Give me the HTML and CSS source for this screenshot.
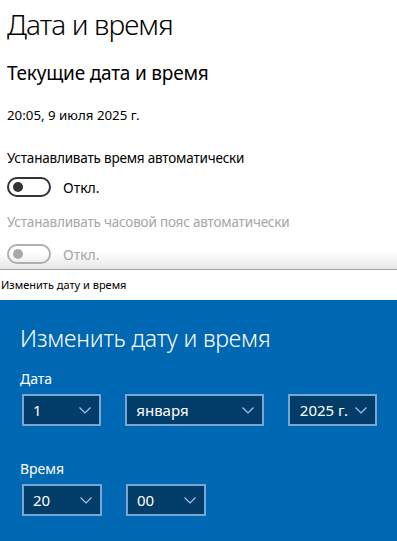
FILE: index.html
```html
<!DOCTYPE html>
<html>

<head>
  <meta charset="utf-8">
  <link rel="stylesheet" href="styles.css">
</head>

<body>
  <div class="настройки">
    <h1 class="заголовок">Дата и время</h1>
    <h2 class="подзаголовок">Текущие дата и время</h2>
    <div class="текущее">20:05, 9 июля 2025 г.</div>

    <div class="подпись">Устанавливать время автоматически</div>
    <div class="переключатель">
      <span class="тумблер"></span>
      <span class="состояние">Откл.</span>
    </div>

    <div class="подпись неактивно">Устанавливать часовой пояс автоматически</div>
    <div class="переключатель неактивно">
      <span class="тумблер"></span>
      <span class="состояние">Откл.</span>
    </div>
  </div>

  <div class="окно-заголовок">Изменить дату и время</div>

  <div class="диалог">
    <div class="диалог-заголовок">Изменить дату и время</div>

    <div class="метка">Дата</div>
    <div class="ряд">
      <div class="список узкий"><span>1</span><svg viewBox="0 0 12 7"><path d="M0.5 0.5 L6 6 L11.5 0.5" /></svg></div>
      <div class="список широкий"><span>января</span><svg viewBox="0 0 12 7"><path d="M0.5 0.5 L6 6 L11.5 0.5" /></svg></div>
      <div class="список год"><span>2025 г.</span><svg viewBox="0 0 12 7"><path d="M0.5 0.5 L6 6 L11.5 0.5" /></svg></div>
    </div>

    <div class="метка время">Время</div>
    <div class="ряд">
      <div class="список узкий"><span>20</span><svg viewBox="0 0 12 7"><path d="M0.5 0.5 L6 6 L11.5 0.5" /></svg></div>
      <div class="список узкий"><span>00</span><svg viewBox="0 0 12 7"><path d="M0.5 0.5 L6 6 L11.5 0.5" /></svg></div>
    </div>
  </div>
</body>

</html>
```

FILE: styles.css
```css
/* базовые стили */
body {
  margin: 0;
  padding: 0;
  background: #0067b3;
  font-family: 'Noto Sans', 'Open Sans', sans-serif;
  color: #000;
  width: 397px;
  height: 541px;
  overflow: hidden;
}

/* верхняя часть - окно параметров */
.настройки {
  height: 270px;
  padding: 0 0 0 7px;
  box-sizing: border-box;
  background: linear-gradient(to bottom, #fff 0, #fff 252px, #e4e4e4 270px);
  border-bottom: 1px solid #a0a0a0;
  overflow: hidden;
}

.заголовок {
  margin: 0;
  padding-top: 6px;
  font-size: 28px;
  font-weight: 300;
  line-height: 36px;
  letter-spacing: -0.9px;
}

.подзаголовок {
  margin: 17px 0 0 0;
  font-size: 19px;
  font-weight: 400;
  line-height: 28px;
  letter-spacing: -0.2px;
}

.текущее {
  margin-top: 19px;
  font-size: 13.3px;
  line-height: 18px;
}

.подпись {
  margin-top: 24px;
  font-size: 13.5px;
  line-height: 20px;
  letter-spacing: -0.2px;
}

.подпись.неактивно {
  margin-top: 15px;
  color: #a6a6a6;
}

.переключатель {
  display: flex;
  align-items: center;
  gap: 12px;
  margin-top: 9px;
}

.тумблер {
  width: 44px;
  height: 20px;
  box-sizing: border-box;
  border: 2px solid #333;
  border-radius: 10px;
  display: flex;
  align-items: center;
  padding-left: 4px;
}

.тумблер::after {
  content: "";
  width: 10px;
  height: 10px;
  border-radius: 50%;
  background: #333;
}

.состояние {
  font-size: 14px;
}

.переключатель.неактивно {
  margin-top: 12px;
}

.переключатель.неактивно .тумблер {
  border-color: #b0b0b0;
}

.переключатель.неактивно .тумблер::after {
  background: #a8a8a8;
}

.переключатель.неактивно .состояние {
  color: #a6a6a6;
}

/* полоса заголовка второго окна */
.окно-заголовок {
  height: 30px;
  background: #fff;
  padding-left: 1px;
  font-size: 11px;
  line-height: 30px;
  color: #000;
}

/* синий диалог */
.диалог {
  padding: 22px 20px 0 20px;
  color: #fff;
}

.диалог-заголовок {
  font-size: 23px;
  font-weight: 300;
  line-height: 32px;
  letter-spacing: -0.15px;
}

.метка {
  margin-top: 15px;
  font-size: 14px;
  line-height: 20px;
}

.метка.время {
  margin-top: 33px;
}

.ряд {
  display: flex;
  gap: 24px;
  margin-top: 5px;
  padding-left: 2px;
}

.список {
  height: 32px;
  box-sizing: border-box;
  border: 2px solid #79a5d3;
  background: #023d6a;
  display: flex;
  align-items: center;
  justify-content: space-between;
  padding: 0 8px 0 9px;
  font-size: 15px;
}

.список svg {
  width: 12px;
  height: 7px;
  fill: none;
  stroke: #a9c6e3;
  stroke-width: 1.2;
}

.узкий {
  width: 80px;
}

.широкий {
  width: 140px;
}

.год {
  width: 90px;
  padding-left: 10px;
}
```
